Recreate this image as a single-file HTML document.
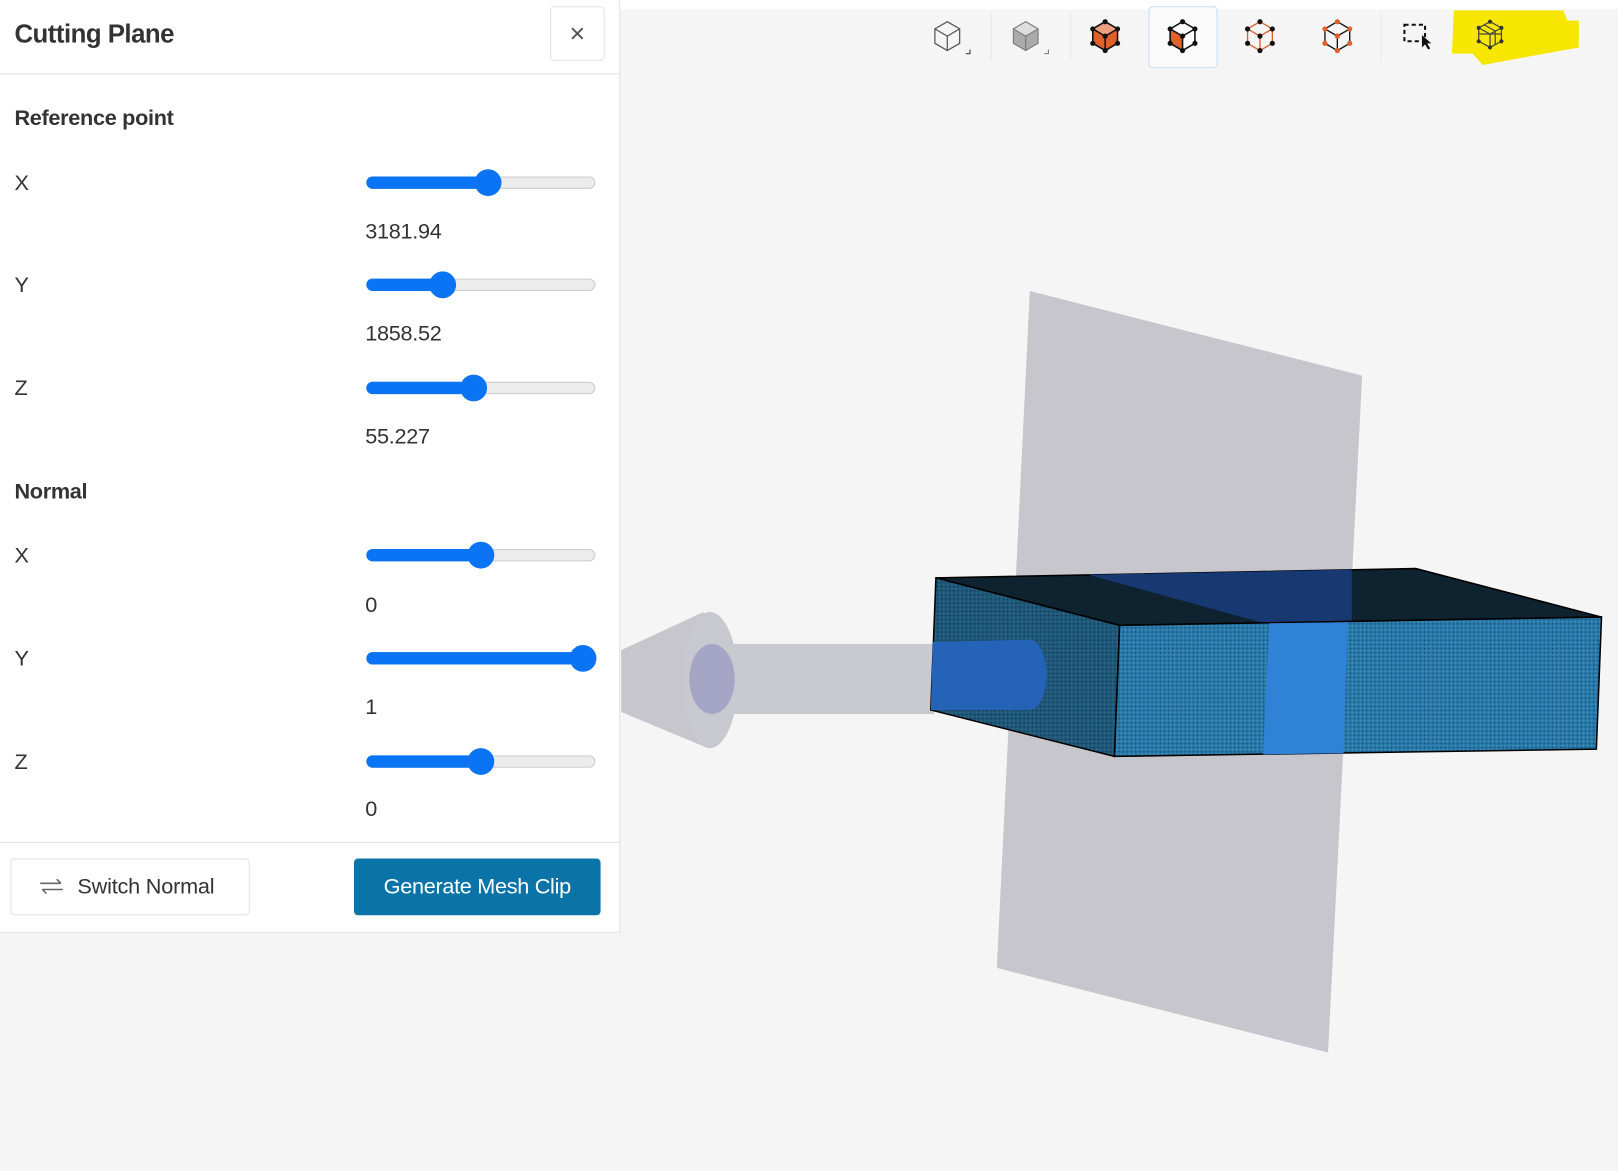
<!DOCTYPE html>
<html><head><meta charset="utf-8"><style>
html,body{margin:0;padding:0;width:1618px;height:1171px;overflow:hidden;background:#f5f5f5;font-family:"Liberation Sans",sans-serif;}
#w{position:absolute;left:0;top:0;width:1568px;height:1135px;transform:scale(1.0319);transform-origin:0 0;background:#f5f5f5;}
.a{position:absolute;}
.t{color:#333;}
.track{position:absolute;left:355px;width:222px;height:12px;border-radius:6px;background:#ececec;border:1px solid #ccc;box-sizing:border-box;}
.fill{position:absolute;left:355px;height:12px;border-radius:6px;background:#0a74f5;}
.th{position:absolute;width:26px;height:26px;border-radius:50%;background:#0a74f5;}
.lbl{position:absolute;left:14px;font-size:21px;color:#333;}
.val{position:absolute;left:354px;font-size:21px;color:#333;letter-spacing:-0.3px}
</style></head><body><div id="w">
<div class="a" style="left:600px;top:0;width:968px;height:9px;background:#fff"></div>
<div class="a" style="left:0;top:0;width:600px;height:903px;background:#fff;border-right:1px solid #e2e2e2;border-bottom:1px solid #e2e2e2"></div>
<div class="a t" style="left:14px;top:19px;font-size:25px;font-weight:bold;color:#333;letter-spacing:-0.5px">Cutting Plane</div>
<div class="a" style="left:533px;top:6px;width:53px;height:53px;border:1px solid #e2e2e2;border-radius:4px;box-sizing:border-box;text-align:center;line-height:50px;font-size:26px;color:#555">×</div>
<div class="a" style="left:0;top:71px;width:600px;height:1px;background:#e2e2e2"></div>
<div class="a t" style="left:14px;top:103px;font-size:21px;font-weight:bold;letter-spacing:-0.3px">Reference point</div>
<div class="a t" style="left:14px;top:465px;font-size:21px;font-weight:bold;letter-spacing:-0.3px">Normal</div>

<div class="lbl" style="top:166px">X</div><div class="track" style="top:171px"></div><div class="fill" style="top:171px;width:120px"></div><div class="th" style="left:460px;top:164px"></div><div class="val" style="top:213px">3181.94</div>
<div class="lbl" style="top:265px">Y</div><div class="track" style="top:270px"></div><div class="fill" style="top:270px;width:76px"></div><div class="th" style="left:416px;top:263px"></div><div class="val" style="top:312px">1858.52</div>
<div class="lbl" style="top:365px">Z</div><div class="track" style="top:370px"></div><div class="fill" style="top:370px;width:106px"></div><div class="th" style="left:446px;top:363px"></div><div class="val" style="top:412px">55.227</div>
<div class="lbl" style="top:527px">X</div><div class="track" style="top:532px"></div><div class="fill" style="top:532px;width:113px"></div><div class="th" style="left:453px;top:525px"></div><div class="val" style="top:575px">0</div>
<div class="lbl" style="top:627px">Y</div><div class="track" style="top:632px"></div><div class="fill" style="top:632px;width:212px"></div><div class="th" style="left:552px;top:625px"></div><div class="val" style="top:674px">1</div>
<div class="lbl" style="top:727px">Z</div><div class="track" style="top:732px"></div><div class="fill" style="top:732px;width:113px"></div><div class="th" style="left:453px;top:725px"></div><div class="val" style="top:773px">0</div>

<div class="a" style="left:0;top:816px;width:600px;height:1px;background:#e2e2e2"></div>
<div class="a" style="left:10px;top:832px;width:232px;height:55px;border:1px solid #e2e2e2;border-radius:4px;box-sizing:border-box"></div>
<svg class="a" style="left:38px;top:850px" width="24" height="18" viewBox="0 0 24 18"><path d="M1 6H21M17 2L21 6M23 12H3M7 16L3 12" stroke="#666" stroke-width="1.5" fill="none"/></svg>
<div class="a t" style="left:75px;top:848px;font-size:21px;letter-spacing:-0.2px">Switch Normal</div>
<div class="a" style="left:343px;top:832px;width:239px;height:55px;background:#0a74a8;border-radius:4px;color:#fff;font-size:21px;text-align:center;line-height:55px;letter-spacing:-0.3px">Generate Mesh Clip</div>

<!-- toolbar -->
<div class="a" style="left:1113px;top:6px;width:67px;height:60px;background:#fafafa;border:1px solid #c8dff0;border-radius:4px;box-sizing:border-box"></div>
<div class="a" style="left:960px;top:12px;width:1px;height:46px;background:#e8e8e8"></div>
<div class="a" style="left:1037px;top:12px;width:1px;height:46px;background:#e8e8e8"></div>
<div class="a" style="left:1338px;top:12px;width:1px;height:46px;background:#e8e8e8"></div>
<svg class="a" style="left:1405px;top:8px" width="128" height="58"><path d="M4 2H110L114 12H125V38L70 48L32 55L22 44H2Z" fill="#f7e600"/></svg>
<svg class="a" style="left:890px;top:10px" width="600" height="50" viewBox="890 10 600 50">
<g stroke="#555" fill="none" stroke-width="1.2"><path d="M918 21L930 28V42L918 49L906 42V28ZM906 28L918 35L930 28M918 35V49"/><path d="M936 52h4v-4"/></g>
<g stroke="#777" stroke-width="1"><path d="M994 21L1006 28V42L994 49L982 42V28Z" fill="#aaa"/><path d="M982 28L994 35L1006 28L994 21Z" fill="#ddd"/><path d="M994 35V49"/><path d="M1012 52h4v-4" fill="none"/></g>
<g stroke="#111" stroke-width="1.5"><path d="M1071 21L1083 28V42L1071 49L1059 42V28Z" fill="#e0602a"/><path d="M1059 28L1071 35L1083 28L1071 21Z" fill="#f0a080"/><path d="M1071 35V49"/></g>
<g fill="#111"><circle cx="1071" cy="21" r="2.5"/><circle cx="1083" cy="28" r="2.5"/><circle cx="1083" cy="42" r="2.5"/><circle cx="1071" cy="49" r="2.5"/><circle cx="1059" cy="42" r="2.5"/><circle cx="1059" cy="28" r="2.5"/><circle cx="1071" cy="35" r="2.5"/></g>
<g stroke="#111" stroke-width="1.5"><path d="M1146 21L1158 28V42L1146 49L1134 42V28Z" fill="#fff"/><path d="M1134 28L1146 35V49L1134 42Z" fill="#e0602a"/><path d="M1146 35L1158 28"/></g>
<g fill="#111"><circle cx="1146" cy="21" r="2.5"/><circle cx="1158" cy="28" r="2.5"/><circle cx="1158" cy="42" r="2.5"/><circle cx="1146" cy="49" r="2.5"/><circle cx="1134" cy="42" r="2.5"/><circle cx="1134" cy="28" r="2.5"/><circle cx="1146" cy="35" r="2.5"/></g>
<g stroke="#e0602a" stroke-width="1.3" fill="none"><path d="M1221 21L1233 28V42L1221 49L1209 42V28ZM1209 28L1221 35L1233 28M1221 35V49"/></g>
<g fill="#111"><circle cx="1221" cy="21" r="2.5"/><circle cx="1233" cy="28" r="2.5"/><circle cx="1233" cy="42" r="2.5"/><circle cx="1221" cy="49" r="2.5"/><circle cx="1209" cy="42" r="2.5"/><circle cx="1209" cy="28" r="2.5"/><circle cx="1221" cy="35" r="2.5"/></g>
<g stroke="#111" stroke-width="1.3" fill="none"><path d="M1296 21L1308 28V42L1296 49L1284 42V28ZM1284 28L1296 35L1308 28M1296 35V49"/></g>
<g fill="#e0602a"><circle cx="1296" cy="21" r="2.5"/><circle cx="1308" cy="28" r="2.5"/><circle cx="1308" cy="42" r="2.5"/><circle cx="1296" cy="49" r="2.5"/><circle cx="1284" cy="42" r="2.5"/><circle cx="1284" cy="28" r="2.5"/><circle cx="1296" cy="35" r="2.5"/></g>
<rect x="1361" y="24" width="20" height="16" stroke="#111" stroke-width="2" stroke-dasharray="4 3" fill="none"/>
<path d="M1378 34L1378 46L1381 43L1384 48L1386 47L1383 42L1387 42Z" fill="#111"/>
<g stroke="#444" stroke-width="1.2" fill="none"><path d="M1444 21L1455 27V40L1444 46L1433 40V27ZM1433 27L1444 33L1455 27M1444 33V46M1438 24L1449 30V43M1433 33L1455 33"/></g>
<g fill="#333"><circle cx="1444" cy="21" r="2"/><circle cx="1455" cy="27" r="2"/><circle cx="1455" cy="40" r="2"/><circle cx="1444" cy="46" r="2"/><circle cx="1433" cy="40" r="2"/><circle cx="1433" cy="27" r="2"/></g>
</svg>

<!-- 3D scene -->
<svg class="a" style="left:0;top:0" width="1568" height="1135">
<defs>
<pattern id="sp" width="4" height="4" patternUnits="userSpaceOnUse"><rect width="4" height="4" fill="#2878a8"/><rect width="1" height="1" fill="#0d3a5c"/><rect x="2" y="2" width="1" height="1" fill="#5aa8d8"/></pattern>
<pattern id="sp2" width="4" height="4" patternUnits="userSpaceOnUse"><rect width="4" height="4" fill="#1f5878"/><rect width="1" height="1" fill="#0a2a40"/><rect x="2" y="2" width="1" height="1" fill="#3a7898"/></pattern>
</defs>
<polygon points="998,282 1320,364 1287,1020 966,938" fill="#c6c6cc"/>
<polygon points="602,630 682,593 686,725 602,690" fill="#c6c6cc"/>
<ellipse cx="688" cy="659" rx="27" ry="66" fill="#c8c8d0"/>
<rect x="690" y="624" width="215" height="68" fill="#c9c9d0"/>
<ellipse cx="690" cy="658" rx="22" ry="34" fill="#a5a5c6"/>
<polygon points="907,560 1372,551 1552,598 1085,606" fill="#0f2230" stroke="#000" stroke-width="1.5"/>
<polygon points="1055,557 1310,552 1310,603 1225,604" fill="#173870"/>
<polygon points="907,560 1085,606 1080,733 902,688" fill="url(#sp2)" stroke="#000" stroke-width="1.5"/>
<polygon points="1085,606 1552,598 1547,726 1080,733" fill="url(#sp)" stroke="#000" stroke-width="1.5"/>
<polygon points="1230,604 1306,603 1302,730 1224,731" fill="#2f82d6"/>
<path d="M904 622L998 620A16 34 0 0 1 998 688L902 688Z" fill="#2563b8"/>
</svg>
</div></body></html>
